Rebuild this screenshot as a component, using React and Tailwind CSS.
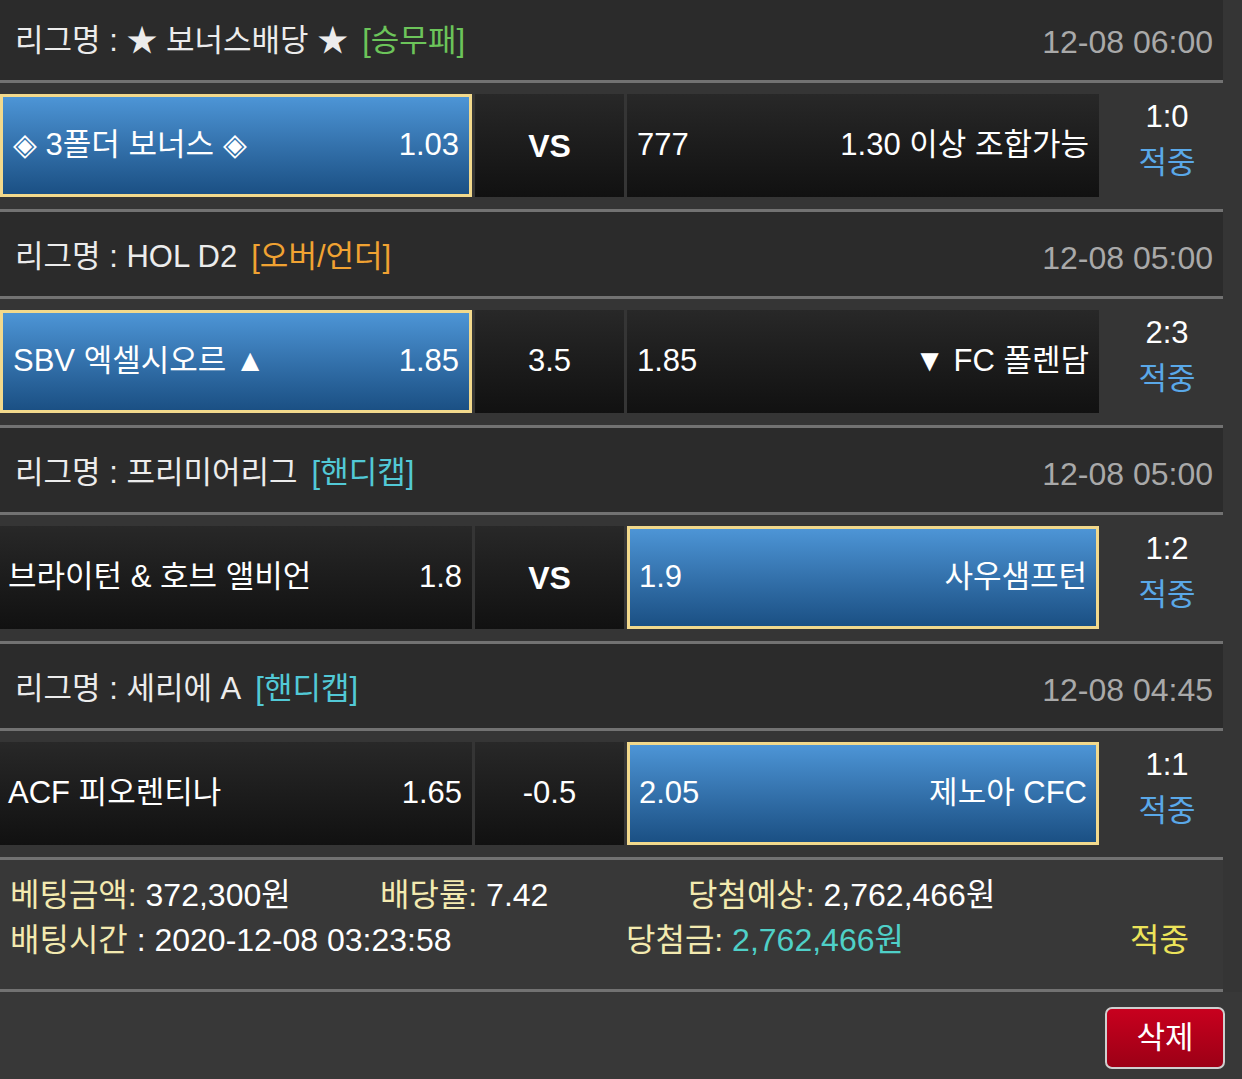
const games = [
  {
    league: "★ 보너스배당 ★",
    tag: "[승무패]",
    tagColor: "text-[#6cc45a]",
    time: "12-08 06:00",
    home: "◈ 3폴더 보너스 ◈",
    homeOdd: "1.03",
    mid: "VS",
    awayOdd: "777",
    away: "1.30 이상 조합가능",
    pick: "home",
    score: "1:0",
  },
  {
    league: "HOL D2",
    tag: "[오버/언더]",
    tagColor: "text-[#f0a232]",
    time: "12-08 05:00",
    home: "SBV 엑셀시오르 ▲",
    homeOdd: "1.85",
    mid: "3.5",
    awayOdd: "1.85",
    away: "▼ FC 폴렌담",
    pick: "home",
    score: "2:3",
  },
  {
    league: "프리미어리그",
    tag: "[핸디캡]",
    tagColor: "text-[#52c9d6]",
    time: "12-08 05:00",
    home: "브라이턴 & 호브 앨비언",
    homeOdd: "1.8",
    mid: "VS",
    awayOdd: "1.9",
    away: "사우샘프턴",
    pick: "away",
    score: "1:2",
  },
  {
    league: "세리에 A",
    tag: "[핸디캡]",
    tagColor: "text-[#52c9d6]",
    time: "12-08 04:45",
    home: "ACF 피오렌티나",
    homeOdd: "1.65",
    mid: "-0.5",
    awayOdd: "2.05",
    away: "제노아 CFC",
    pick: "away",
    score: "1:1",
  },
];

const picked =
  "bg-gradient-to-b from-[#4d95d6] to-[#1b5084] border-[3px] border-[#f2d98c]";
const plain = "bg-gradient-to-b from-[#282828] to-[#111111]";

function GameBlock({ g, first }) {
  return (
    <div>
      {/* league header */}
      <div
        className={`${first ? "h-[83px] pt-[3px]" : "h-[87px] pt-[7px]"} bg-[#2b2b2b] flex items-center justify-between pl-[15px] pr-[10px] border-b-[3px] border-[#727272]`}
      >
        <div className="text-[31px] text-[#ececec]">
          리그명 : {g.league}
          <span className={`ml-[14px] ${g.tagColor}`}>{g.tag}</span>
        </div>
        <div className="text-[32px] text-[#a9a9a9]">{g.time}</div>
      </div>

      {/* match row */}
      <div className="h-[129px] bg-[#353535] flex pt-[11px] pb-[12px] border-b-[3px] border-[#727272]">
        <div
          className={`w-[472px] flex items-center justify-between text-[31px] text-white ${
            g.pick === "home" ? picked + " px-[10px]" : plain + " pl-[8px] pr-[10px]"
          }`}
        >
          <span>{g.home}</span>
          <span>{g.homeOdd}</span>
        </div>
        <div
          className={`ml-[3px] w-[149px] flex items-center justify-center text-[31px] text-white ${plain} ${
            g.mid === "VS" ? "font-bold text-[32px]" : ""
          }`}
        >
          {g.mid}
        </div>
        <div
          className={`ml-[3px] w-[472px] flex items-center justify-between text-[31px] text-white ${
            g.pick === "away" ? picked + " px-[9px]" : plain + " px-[10px]"
          }`}
        >
          <span>{g.awayOdd}</span>
          <span>{g.away}</span>
        </div>
        <div className="w-[124px] flex flex-col items-center -mt-[11px] pt-[11px] pl-[12px] leading-[46px] text-[31px]">
          <span className="text-white">{g.score}</span>
          <span className="text-[#5aa8e8]">적중</span>
        </div>
      </div>
    </div>
  );
}

export default function App() {
  return (
    <div className="min-h-[1079px] bg-[#353535] font-['Liberation_Sans','Noto_Sans_CJK_KR',sans-serif]">
      <div className="w-[1223px]">
        {games.map((g, i) => (
          <GameBlock key={i} g={g} first={i === 0} />
        ))}

        {/* summary */}
        <div className="h-[132px] bg-[#383838] pt-[13px] pl-[10px] text-[32px] leading-[45px] border-b-[3px] border-[#727272]">
          <div className="flex">
            <div className="w-[370px]">
              <span className="text-[#f3eab0]">베팅금액: </span>
              <span className="text-white">372,300원</span>
            </div>
            <div className="w-[308px]">
              <span className="text-[#f3eab0]">배당률: </span>
              <span className="text-white">7.42</span>
            </div>
            <div>
              <span className="text-[#f3eab0]">당첨예상: </span>
              <span className="text-white">2,762,466원</span>
            </div>
          </div>
          <div className="flex">
            <div className="w-[616px]">
              <span className="text-[#f3eab0]">배팅시간</span>
              <span className="text-white"> : 2020-12-08 03:23:58</span>
            </div>
            <div className="w-[504px]">
              <span className="text-[#f3eab0]">당첨금: </span>
              <span className="text-[#4fd0c8]">2,762,466원</span>
            </div>
            <div className="text-[#ece35a]">적중</div>
          </div>
        </div>
      </div>

      {/* footer */}
      <div className="bg-[#383838] h-[90px] flex justify-end pt-[15px] pr-[17px]">
        <button className="w-[120px] h-[62px] rounded-[7px] border-[2px] border-[#cfcfcf] bg-gradient-to-b from-[#c8001e] to-[#9c0016] text-white text-[31px]">
          삭제
        </button>
      </div>
    </div>
  );
}
